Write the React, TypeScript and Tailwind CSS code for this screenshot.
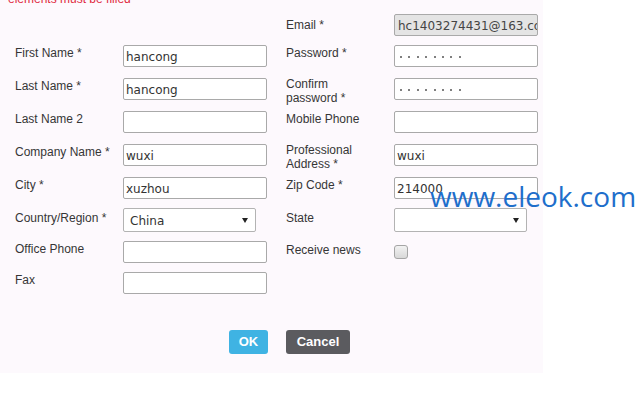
import React from "react";

const label = "text-[12px] leading-[14px] text-[#363636] w-[108px] shrink-0";
const box =
    "h-[22px] w-[144px] border border-[#a9a9a9] rounded-[2px] bg-white px-[2px] pt-[2px] text-[12px] text-[#333] outline-none";

const Field = ({ value = "" }: { value?: string }) => (
    <input readOnly value={value} className={box} style={{ fontFamily: "'DejaVu Sans', sans-serif" }} />
);

const Dots = () => (
    <div className="h-[22px] w-[144px] border border-[#a9a9a9] rounded-[2px] bg-white flex items-center pl-[5px] pt-[2px] gap-[6.4px]">
        {[0, 1, 2, 3, 4, 5, 6, 7].map((i) => (
            <span key={i} className="block w-[2px] h-[2px] bg-[#555] rounded-full" />
        ))}
    </div>
);

const Select = ({ value = "" }: { value?: string }) => (
    <div
        className="h-[24px] w-[133px] border border-[#b3b3b3] rounded-[2px] bg-white flex items-center justify-between pl-[6px] pr-[7px] pt-[2px] text-[12px] text-[#333]"
        style={{ fontFamily: "'DejaVu Sans', sans-serif" }}
    >
        <span>{value}</span>
        <svg width="6" height="5" viewBox="0 0 6 5" className="-mt-[2px]">
            <polygon points="0,0 6,0 3,5" fill="#222" />
        </svg>
    </div>
);

const Row = ({ h, children }: { h: string; children: React.ReactNode }) => (
    <div className={`flex items-start ${h}`}>{children}</div>
);

const Gap = () => <div className="w-[19px] shrink-0" />;

export default function App() {
    return (
        <div className="relative w-[638px] h-[397px] bg-white overflow-hidden" style={{ fontFamily: "'Liberation Sans', Arial, sans-serif" }}>
            <div className="flow-root w-[543px] h-[373px] bg-[#fdf9fd] pl-[15px]">
                <div className="-mt-[8px] -ml-[7px] text-[12px] leading-[14px] text-[#e02a3e]">elements must be filled</div>

                <div className="mt-[8px] flex flex-col">
                    <Row h="h-[31px]">
                        <div className="w-[108px] shrink-0" />
                        <div className="w-[144px] shrink-0" />
                        <Gap />
                        <div className={`${label} mt-[4px]`}>Email *</div>
                        <div
                            className="h-[22px] w-[144px] border border-[#a9a9a9] rounded-[2px] bg-[#e4e4e4] pl-[3px] pt-[2px] text-[12px] text-[#444] whitespace-nowrap overflow-hidden flex items-center"
                            style={{ fontFamily: "'DejaVu Sans', sans-serif" }}
                        >
                            hc1403274431@163.com
                        </div>
                    </Row>
                    <Row h="h-[33px]">
                        <div className={`${label} mt-[1px]`}>First Name *</div>
                        <Field value="hancong" />
                        <Gap />
                        <div className={`${label} mt-[1px]`}>Password *</div>
                        <Dots />
                    </Row>
                    <Row h="h-[33px]">
                        <div className={`${label} mt-[1px]`}>Last Name *</div>
                        <Field value="hancong" />
                        <Gap />
                        <div className={`${label} leading-[11px] -mt-[1px]`}>
                            Confirm
                            <br />
                            password *
                        </div>
                        <Dots />
                    </Row>
                    <Row h="h-[33px]">
                        <div className={`${label} mt-[1px]`}>Last Name 2</div>
                        <Field />
                        <Gap />
                        <div className={`${label} mt-[1px]`}>Mobile Phone</div>
                        <Field />
                    </Row>
                    <Row h="h-[33px]">
                        <div className={`${label} mt-[1px]`}>Company Name *</div>
                        <Field value="wuxi" />
                        <Gap />
                        <div className={`${label} leading-[11px] -mt-[1px]`}>
                            Professional
                            <br />
                            Address *
                        </div>
                        <Field value="wuxi" />
                    </Row>
                    <Row h="h-[31px]">
                        <div className={`${label} mt-[1px]`}>City *</div>
                        <Field value="xuzhou" />
                        <Gap />
                        <div className={`${label} mt-[1px]`}>Zip Code *</div>
                        <Field value="214000" />
                    </Row>
                    <Row h="h-[33px]">
                        <div className={`${label} mt-[3px]`}>Country/Region *</div>
                        <div className="w-[144px] shrink-0">
                            <Select value="China" />
                        </div>
                        <Gap />
                        <div className={`${label} mt-[3px]`}>State</div>
                        <Select />
                    </Row>
                    <Row h="h-[31px]">
                        <div className={`${label} mt-[1px]`}>Office Phone</div>
                        <Field />
                        <Gap />
                        <div className={`${label} mt-[2px]`}>Receive news</div>
                        <div className="mt-[4px] w-[14px] h-[14px] rounded-[3px] border border-[#a5a5a5] bg-gradient-to-b from-[#f2f2f2] to-[#d8d8d8]" />
                    </Row>
                    <Row h="h-[22px]">
                        <div className={`${label} mt-[1px]`}>Fax</div>
                        <Field />
                    </Row>
                </div>

                <div className="mt-[36px] pl-[214px] flex gap-[18px]">
                    <button className="h-[24px] w-[39px] rounded-[3px] bg-[#3fb3e3] text-white text-[13px] font-bold">OK</button>
                    <button className="h-[24px] w-[64px] rounded-[3px] bg-[#5b5b5f] text-white text-[13px] font-bold">Cancel</button>
                </div>
            </div>

            <div
                className="absolute left-[430px] top-[182px] text-[28px] leading-[28px] text-[#1e6ecb] whitespace-nowrap"
                style={{ fontFamily: "'Open Sans', sans-serif" }}
            >
                www.eleok.com
            </div>
        </div>
    );
}
